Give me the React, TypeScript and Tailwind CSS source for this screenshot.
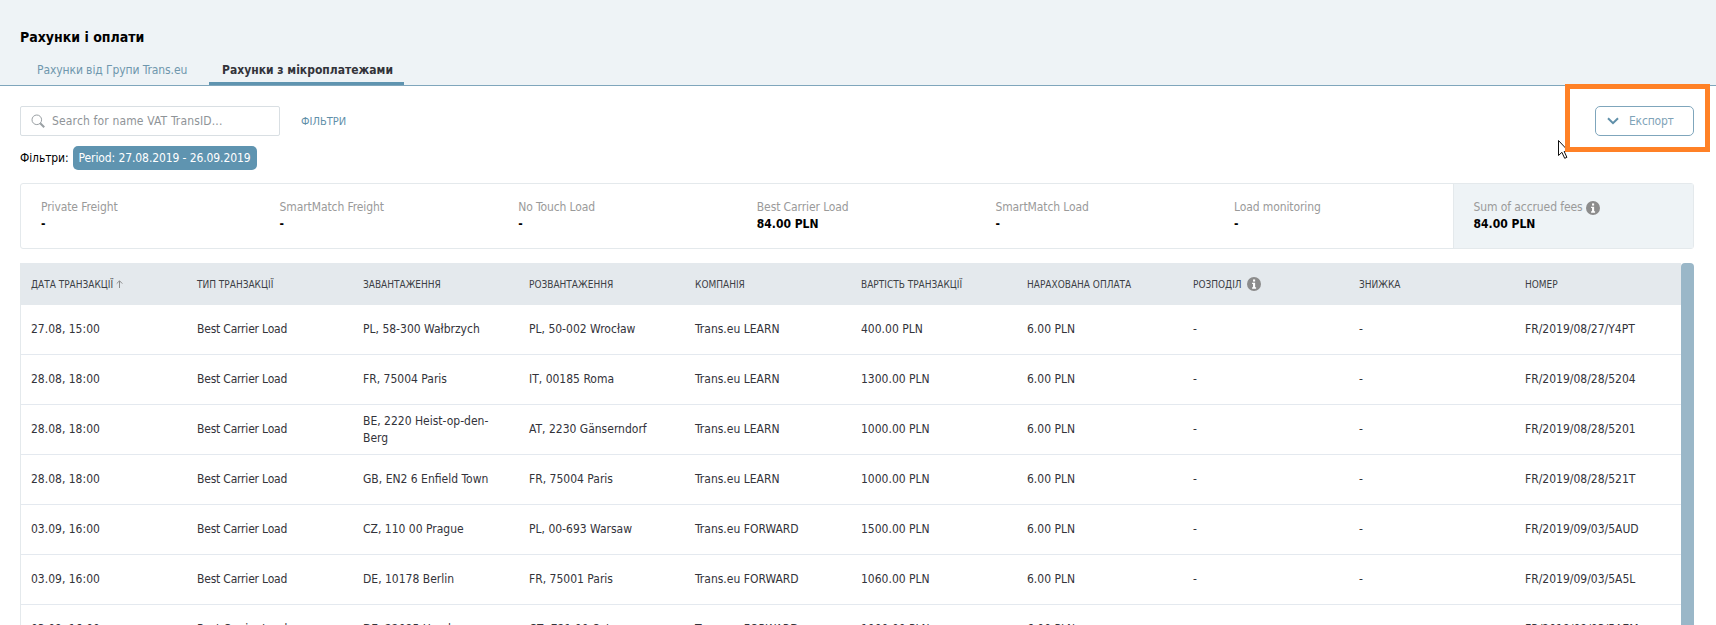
const rootFont = "[font-family:'DejaVu_Sans',sans-serif] [font-stretch:condensed]";

const stats = [
  ["Private Freight", "-"],
  ["SmartMatch Freight", "-"],
  ["No Touch Load", "-"],
  ["Best Carrier Load", "84.00 PLN"],
  ["SmartMatch Load", "-"],
  ["Load monitoring", "-"],
];

const heads = ["ДАТА ТРАНЗАКЦІЇ", "ТИП ТРАНЗАКЦІЇ", "ЗАВАНТАЖЕННЯ", "РОЗВАНТАЖЕННЯ", "КОМПАНІЯ", "ВАРТІСТЬ ТРАНЗАКЦІЇ", "НАРАХОВАНА ОПЛАТА", "РОЗПОДІЛ", "ЗНИЖКА", "НОМЕР"];

const rows = [
  ["27.08, 15:00", "PL, 58-300 Wałbrzych", "PL, 50-002 Wrocław", "Trans.eu LEARN", "400.00 PLN", "FR/2019/08/27/Y4PT"],
  ["28.08, 18:00", "FR, 75004 Paris", "IT, 00185 Roma", "Trans.eu LEARN", "1300.00 PLN", "FR/2019/08/28/5204"],
  ["28.08, 18:00", "BE, 2220 Heist-op-den-Berg", "AT, 2230 Gänserndorf", "Trans.eu LEARN", "1000.00 PLN", "FR/2019/08/28/5201"],
  ["28.08, 18:00", "GB, EN2 6 Enfield Town", "FR, 75004 Paris", "Trans.eu LEARN", "1000.00 PLN", "FR/2019/08/28/521T"],
  ["03.09, 16:00", "CZ, 110 00 Prague", "PL, 00-693 Warsaw", "Trans.eu FORWARD", "1500.00 PLN", "FR/2019/09/03/5AUD"],
  ["03.09, 16:00", "DE, 10178 Berlin", "FR, 75001 Paris", "Trans.eu FORWARD", "1060.00 PLN", "FR/2019/09/03/5A5L"],
  ["03.09, 16:00", "DE, 22085 Hamburg", "CZ, 721 00 Ostrava", "Trans.eu FORWARD", "1000.00 PLN", "FR/2019/09/03/5A7M"],
];

function Info() {
  return (
    <svg width={14} height={14} viewBox="0 0 16 16" className="shrink-0">
      <circle cx="8" cy="8" r="8" fill="#8c8c8c" />
      <rect x="6.9" y="2.8" width="2.4" height="2.4" fill="#fff" />
      <path d="M5.8 6.5h3.5v5.2h1.1v1.6H5.8v-1.6h1.1V8.1H5.8z" fill="#fff" />
    </svg>
  );
}

export default function App() {
  return (
    <div className={`relative h-[625px] w-[1716px] overflow-hidden bg-white ${rootFont} text-[12px] leading-[17px] text-[#33333a]`}>
      <header className="h-[86px] border-b border-[#7fa6bc] bg-[#eef3f6] pt-[28px]">
        <h1 className="pl-5 text-[14px] font-bold leading-[18px] text-black">Рахунки і оплати</h1>
        <nav className="mt-[13px] flex pl-[20px]">
          <div className="h-[26px] w-[189px] pl-[17px] pt-[3px] tracking-[-0.1px] text-[#6f97ad]">Рахунки від Групи Trans.eu</div>
          <div className="h-[26px] w-[195px] border-b-[3px] border-[#5f94b0] pl-[13px] pt-[3px] font-bold text-[#33333a]">Рахунки з мікроплатежами</div>
        </nav>
      </header>

      <main className="pl-5 pr-[22px]">
        <div className="flex h-[50px] pt-[20px]">
          <div className="flex h-[30px] w-[260px] items-center rounded-[2px] border border-[#d9dfe3] pl-[10px] tracking-[0.15px] text-[#8f9498]">
            <svg width="14" height="14" viewBox="0 0 14 14" fill="none" stroke="#9aa0a4" strokeWidth="1" className="mr-[7px]">
              <circle cx="5.8" cy="5.8" r="4.8" />
              <path d="M9.2 9.2l4 4" strokeWidth="2" />
            </svg>
            Search for name VAT TransID...
          </div>
          <div className="ml-[21px] flex h-[30px] items-center text-[11px] text-[#5f8fa9]">ФІЛЬТРИ</div>
          <button className="ml-auto flex h-[30px] w-[99px] items-center rounded-[5px] border border-[#7fa6bc] pl-[11px] tracking-[-0.2px] text-[#7fa3b8]">
            <svg width="12" height="8" viewBox="0 0 12 8" fill="none" stroke="#5f8fa9" strokeWidth="2" className="mr-[10px]">
              <path d="M1 1.2L6 6.2l5-5" />
            </svg>
            Експорт
          </button>
        </div>

        <div className="mt-[10px] flex h-[24px] items-center">
          <span className="tracking-[-0.1px] text-black">Фільтри:</span>
          <span className="ml-[4px] flex h-[24px] w-[184px] items-center justify-center rounded-[5px] bg-[#5f94b0] tracking-[-0.1px] text-white">Period: 27.08.2019 - 26.09.2019</span>
        </div>

        <section className="mt-[13px] grid h-[66px] grid-cols-[repeat(6,238.6px)_1fr] rounded-[3px] border border-[#e4e9ec]">
          {stats.map(([label, value]) => (
            <div key={label} className="pl-[20px] pt-[15px]">
              <div className="tracking-[-0.1px] text-[#9a9a9a]">{label}</div>
              <div className="font-bold text-black">{value}</div>
            </div>
          ))}
          <div className="border-l border-[#e4e9ec] bg-[#eef3f6] pl-[20px] pt-[15px]">
            <div className="flex items-center gap-[3px] tracking-[-0.1px] text-[#9a9a9a]">Sum of accrued fees <Info /></div>
            <div className="font-bold text-black">84.00 PLN</div>
          </div>
        </section>

        <section className="mt-[14px] flex">
          <div className="w-[1661px] border-l border-[#e4e9ec]">
            <div className="grid h-[42px] grid-cols-[repeat(10,166px)] items-center bg-[#e4e9ed] text-[10px] text-[#3c3f45]">
              {heads.map((h, i) => (
                <div key={h} className="flex items-center pl-[10px]">
                  {h}
                  {i === 0 && (
                    <svg width="7" height="8" viewBox="0 0 7 8" fill="none" stroke="#8c8c8c" strokeWidth="1" className="ml-[3px]">
                      <path d="M3.5 8V1M.7 3.6l2.8-2.8 2.8 2.8" />
                    </svg>
                  )}
                  {i === 7 && <span className="ml-[5px]"><Info /></span>}
                </div>
              ))}
            </div>
            {rows.map((r, i) => (
              <div key={i} className="grid h-[50px] grid-cols-[repeat(10,166px)] items-center border-b border-[#e4e9ef]">
                <div className="pl-[10px]">{r[0]}</div>
                <div className="pl-[10px] tracking-[-0.2px]">Best Carrier Load</div>
                <div className="pl-[10px] pr-[20px]">{r[1]}</div>
                <div className="pl-[10px]">{r[2]}</div>
                <div className="pl-[10px]">{r[3]}</div>
                <div className="pl-[10px]">{r[4]}</div>
                <div className="pl-[10px]">6.00 PLN</div>
                <div className="pl-[10px]">-</div>
                <div className="pl-[10px]">-</div>
                <div className="pl-[10px]">{r[5]}</div>
              </div>
            ))}
          </div>
          <div className="h-[400px] w-[13px] rounded-t-[4px] bg-[#9ab7c8]" />
        </section>
      </main>

      <svg width="14" height="20" viewBox="0 0 14 20" className="absolute left-[1558px] top-[139px]">
        <path d="M.5 1.5v15l3.4-3.2 2.8 6 2.2-1-2.7-5.8h4.6z" fill="#fff" stroke="#111" strokeWidth="1" />
      </svg>
      <div className="absolute left-[1565px] top-[84px] h-[68px] w-[145px] border-[5px] border-[#ff8126]" />
    </div>
  );
}
